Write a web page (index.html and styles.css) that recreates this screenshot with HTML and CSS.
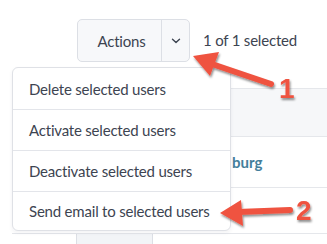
FILE: index.html
```html
<!DOCTYPE html>
<html lang="en">
<head>
  <meta charset="UTF-8">
  <meta name="viewport" content="width=device-width, initial-scale=1.0">
  <title>Users - Actions</title>
  <link rel="stylesheet" href="styles.css">
</head>
<body>

<div class="page">
  <div class="toolbar">
    <div class="actions">
      <div class="btn-group">
        <button class="btn-main">Actions</button>
        <button class="btn-toggle">
          <svg width="10" height="6" viewBox="0 0 10 6"><path d="M1.5 1.2 L5 4.6 L8.5 1.2" fill="none" stroke="#3d4451" stroke-width="1.4" stroke-linecap="round" stroke-linejoin="round"/></svg>
        </button>
      </div>
      <ul class="dropdown">
        <li>Delete selected users</li>
        <li>Activate selected users</li>
        <li>Deactivate selected users</li>
        <li>Send email to selected users</li>
      </ul>
    </div>
    <span class="counter">1 of 1 selected</span>
  </div>

  <table class="results">
    <thead>
      <tr>
        <th class="col-check"></th>
        <th class="col-user"></th>
        <th class="col-city"></th>
      </tr>
    </thead>
    <tbody>
      <tr>
        <td class="col-check"></td>
        <td class="col-user"></td>
        <td class="col-city"><a href="#">burg</a></td>
      </tr>
      <tr>
        <td class="col-check"></td>
        <td class="col-user"></td>
        <td class="col-city"></td>
      </tr>
      <tr class="footer-row">
        <td class="col-check"></td>
        <td class="col-user sorted"></td>
        <td class="col-city"></td>
      </tr>
    </tbody>
  </table>

  <!-- annotation arrows drawn over the screenshot -->
  <svg class="annotations" width="327" height="244" viewBox="0 0 327 244">
    <defs>
      <filter id="shade" x="-20%" y="-20%" width="140%" height="160%">
        <feDropShadow dx="1" dy="2" stdDeviation="1.1" flood-color="#000" flood-opacity="0.45"/>
      </filter>
    </defs>
    <g filter="url(#shade)" fill="#ef5340">
      <line x1="212" y1="64" x2="271" y2="84" stroke="#ef5340" stroke-width="6" stroke-linecap="round"/>
      <polygon points="193,56 219,52 210,76"/>
      <text x="279" y="98" class="num">1</text>

      <line x1="238" y1="212" x2="290" y2="210" stroke="#ef5340" stroke-width="6" stroke-linecap="round"/>
      <polygon points="220,213 241,200 243,226"/>
      <text x="296" y="220" class="num">2</text>
    </g>
  </svg>
</div>

</body>
</html>
```

FILE: styles.css
```css
* {
  box-sizing: border-box;
}
body {
  margin: 0;
  background-color: #fff;
  font-family: Lato, "Open Sans", sans-serif;
  letter-spacing: -0.2px;
  color: #3d4451;
  overflow: hidden;
}
.page {
  position: relative;
  width: 327px;
  height: 244px;
}
.toolbar {
  display: flex;
  align-items: center;
  gap: 13px;
  padding: 19px 0 0 77px;
}
.actions {
  position: relative;
}
.btn-group {
  display: flex;
  height: 43px;
  border: 1px solid #dcdfe5;
  border-radius: 5px;
  background-color: #f7f8fa;
  overflow: hidden;
}
.btn-group button {
  border: none;
  background: none;
  font-family: inherit;
  font-size: 15px;
  letter-spacing: -0.2px;
  color: #3d4451;
  padding: 0;
}
.btn-main {
  width: 84px;
  padding-left: 4px !important;
  border-right: 1px solid #dcdfe5 !important;
}
.btn-toggle {
  width: 27px;
  display: flex;
  align-items: center;
  justify-content: center;
}
.counter {
  font-size: 15px;
  color: #3d4451;
  margin-top: -1px;
}
.dropdown {
  position: absolute;
  z-index: 5;
  top: 48px;
  left: -65px;
  width: 219px;
  margin: 0;
  padding: 0;
  list-style: none;
  background-color: #fff;
  border: 1px solid #dfe1e6;
  border-radius: 6px;
  box-shadow: 0 2px 4px rgba(30, 40, 60, 0.06);
}
.dropdown li {
  height: 41px;
  display: flex;
  align-items: center;
  padding-left: 16px;
  font-size: 15px;
  color: #3d4451;
}
.dropdown li + li {
  border-top: 1px solid #e3e5ea;
}
.dropdown li:last-child {
  height: 39px;
}
.results {
  margin: 26px 0 0 12px;
  border-collapse: collapse;
  width: 330px;
  font-size: 15px;
}
.results th {
  height: 48px;
  background-color: #f6f7f9;
  border-top: 1px solid #e5e7eb;
  border-bottom: 1px solid #e5e7eb;
}
.results td {
  height: 51px;
  border-bottom: 1px solid #e5e7eb;
}
.results tbody tr:nth-child(2) td {
  height: 46px;
}
.col-check {
  width: 64px;
}
.col-user {
  width: 76px;
}
.results td.col-city {
  padding-left: 80px;
}
.results a {
  color: #447e9b;
  font-weight: bold;
  letter-spacing: 0;
  text-decoration: none;
}
.footer-row td {
  height: 20px;
  border-bottom: none;
}
.footer-row .sorted {
  background-color: #f2f4f7;
  border-left: 1px solid #dcdfe5;
  border-right: 1px solid #dcdfe5;
}
.annotations {
  position: absolute;
  top: 0;
  left: 0;
  z-index: 10;
  pointer-events: none;
}
.num {
  font-family: "Liberation Sans", Arial, sans-serif;
  font-weight: bold;
  font-size: 28px;
  letter-spacing: 0;
}
```
